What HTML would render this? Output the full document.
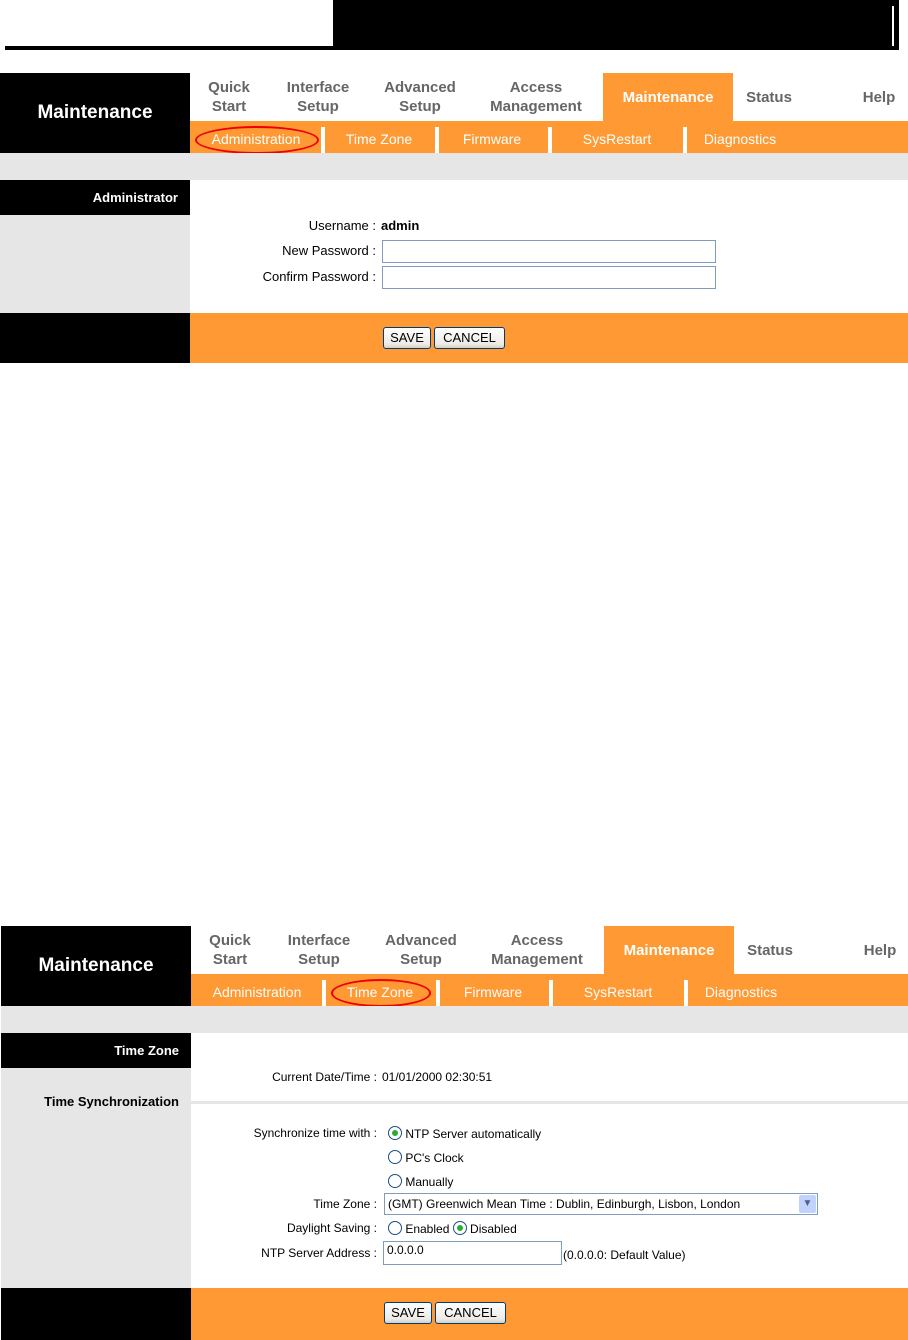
<!DOCTYPE html>
<html><head><meta charset="utf-8"><style>
*{margin:0;padding:0;box-sizing:border-box}
body{width:908px;height:1340px;background:#fff;position:relative;overflow:hidden;font-family:"Liberation Sans",Arial,sans-serif}
.a{position:absolute}
.blk{position:absolute;left:0;width:908px}
.nav{position:absolute;color:#666;font-weight:bold;font-size:15px;text-align:center;line-height:19px;transform:translateX(-50%);white-space:nowrap}
.sub{position:absolute;color:#fff;font-size:14px;transform:translateX(-50%);white-space:nowrap;line-height:16px}
.sep{position:absolute;width:4px;background:#fff}
.lbl{position:absolute;font-size:13px;color:#000;text-align:right;white-space:nowrap;line-height:16px}
.inp{position:absolute;border:1px solid #7f9db9;background:#fff;font-size:12px;padding:1px 3px}
.btn{position:absolute;height:22px;border:1px solid #003c74;border-radius:3px;background:linear-gradient(#fff,#ecebe6 80%,#d6d0c5);font-size:13px;text-align:center;line-height:20px}
.rad{display:inline-block;width:14px;height:14px;border:1px solid #1c5180;border-radius:50%;background:#fff;vertical-align:-2px;position:relative}
.rad.on::after{content:"";position:absolute;left:3px;top:3px;width:6px;height:6px;border-radius:50%;background:#2dad2d}
.oval{position:absolute;border:2px solid #e00;border-radius:50%}
</style></head><body>
<!-- header -->
<div class="a" style="left:5px;top:46px;width:330px;height:4px;background:#000"></div>
<div class="a" style="left:333px;top:0;width:566px;height:50px;background:#000"></div>
<div class="a" style="left:892px;top:6px;width:2px;height:40px;background:#fff"></div>

<!-- block 1 -->
<div class="blk" style="top:73px;height:290px">
 <div class="a" style="left:0;top:0;width:190px;height:80px;background:#000;color:#fff;font-weight:bold;font-size:19px;line-height:80px;text-align:center">Maintenance</div>
 <div class="a" style="left:603px;top:0;width:130px;height:48px;background:#ff9933"></div>
 <div class="nav" style="left:229px;top:5px">Quick<br>Start</div>
 <div class="nav" style="left:318px;top:5px">Interface<br>Setup</div>
 <div class="nav" style="left:420px;top:5px">Advanced<br>Setup</div>
 <div class="nav" style="left:536px;top:5px">Access<br>Management</div>
 <div class="nav" style="left:668px;top:15px;color:#fff">Maintenance</div>
 <div class="nav" style="left:769px;top:15px">Status</div>
 <div class="nav" style="left:879px;top:15px">Help</div>
 <div class="a" style="left:190px;top:48px;width:718px;height:32px;background:#ff9933"></div>
 <div class="sep" style="left:321px;top:54px;height:26px"></div>
 <div class="sep" style="left:435px;top:54px;height:26px"></div>
 <div class="sep" style="left:548px;top:54px;height:26px"></div>
 <div class="sep" style="left:683px;top:54px;height:26px"></div>
 <div class="sub" style="left:256px;top:58px">Administration</div>
 <div class="sub" style="left:379px;top:58px">Time Zone</div>
 <div class="sub" style="left:492px;top:58px">Firmware</div>
 <div class="sub" style="left:617px;top:58px">SysRestart</div>
 <div class="sub" style="left:740px;top:58px">Diagnostics</div>
 <div class="oval" style="left:195px;top:53px;width:124px;height:28px"></div>
 <div class="a" style="left:0;top:80px;width:908px;height:27px;background:#e6e6e6"></div>
 <div class="a" style="left:0;top:107px;width:190px;height:133px;background:#e6e6e6"></div>
 <div class="a" style="left:0;top:107px;width:190px;height:35px;background:#000;color:#fff;font-weight:bold;font-size:13px;text-align:right;padding-right:12px;line-height:35px">Administrator</div>
 <div class="lbl" style="right:532px;top:145px">Username :</div>
 <div class="lbl" style="left:381px;top:145px;font-weight:bold">admin</div>
 <div class="lbl" style="right:532px;top:170px">New Password :</div>
 <div class="inp" style="left:382px;top:167px;width:334px;height:23px"></div>
 <div class="lbl" style="right:532px;top:196px">Confirm Password :</div>
 <div class="inp" style="left:382px;top:193px;width:334px;height:23px"></div>
 <div class="a" style="left:0;top:240px;width:190px;height:50px;background:#000"></div>
 <div class="a" style="left:190px;top:240px;width:718px;height:50px;background:#ff9933"></div>
 <div class="btn" style="left:383px;top:254px;width:48px">SAVE</div>
 <div class="btn" style="left:434px;top:254px;width:71px">CANCEL</div>
</div>

<!-- block 2 -->
<div class="blk" style="top:926px;height:414px;left:1px">
 <div class="a" style="left:0;top:0;width:190px;height:80px;background:#000;color:#fff;font-weight:bold;font-size:19px;line-height:80px;text-align:center">Maintenance</div>
 <div class="a" style="left:603px;top:0;width:130px;height:48px;background:#ff9933"></div>
 <div class="nav" style="left:229px;top:5px">Quick<br>Start</div>
 <div class="nav" style="left:318px;top:5px">Interface<br>Setup</div>
 <div class="nav" style="left:420px;top:5px">Advanced<br>Setup</div>
 <div class="nav" style="left:536px;top:5px">Access<br>Management</div>
 <div class="nav" style="left:668px;top:15px;color:#fff">Maintenance</div>
 <div class="nav" style="left:769px;top:15px">Status</div>
 <div class="nav" style="left:879px;top:15px">Help</div>
 <div class="a" style="left:190px;top:48px;width:718px;height:32px;background:#ff9933"></div>
 <div class="sep" style="left:321px;top:54px;height:26px"></div>
 <div class="sep" style="left:435px;top:54px;height:26px"></div>
 <div class="sep" style="left:548px;top:54px;height:26px"></div>
 <div class="sep" style="left:683px;top:54px;height:26px"></div>
 <div class="sub" style="left:256px;top:58px">Administration</div>
 <div class="sub" style="left:379px;top:58px">Time Zone</div>
 <div class="sub" style="left:492px;top:58px">Firmware</div>
 <div class="sub" style="left:617px;top:58px">SysRestart</div>
 <div class="sub" style="left:740px;top:58px">Diagnostics</div>
 <div class="oval" style="left:330px;top:53px;width:100px;height:28px"></div>
 <div class="a" style="left:0;top:80px;width:908px;height:27px;background:#e6e6e6"></div>
 <div class="a" style="left:0;top:107px;width:190px;height:255px;background:#e6e6e6"></div>
 <div class="a" style="left:0;top:107px;width:190px;height:35px;background:#000;color:#fff;font-weight:bold;font-size:13px;text-align:right;padding-right:12px;line-height:35px">Time Zone</div>
 <div class="a" style="left:0;top:168px;width:190px;font-weight:bold;font-size:13px;text-align:right;padding-right:12px">Time Synchronization</div>
 <div class="a" style="left:190px;top:175px;width:718px;height:3px;background:#e6e6e6"></div>
 <div class="lbl" style="right:532px;top:143px;font-size:12px">Current Date/Time :</div>
 <div class="lbl" style="left:381px;top:143px;font-size:12px">01/01/2000 02:30:51</div>
 <div class="lbl" style="right:532px;top:199px;font-size:12px">Synchronize time with :</div>
 <div class="lbl" style="left:387px;top:200px;font-size:12px"><span class="rad on"></span> NTP Server automatically</div>
 <div class="lbl" style="left:387px;top:224px;font-size:12px"><span class="rad"></span> PC's Clock</div>
 <div class="lbl" style="left:387px;top:248px;font-size:12px"><span class="rad"></span> Manually</div>
 <div class="lbl" style="right:532px;top:270px;font-size:12px">Time Zone :</div>
 <div class="inp" style="left:383px;top:267px;width:434px;height:22px;font-size:12px;line-height:18px">(GMT) Greenwich Mean Time : Dublin, Edinburgh, Lisbon, London
  <div class="a" style="right:1px;top:1px;width:17px;height:18px;background:#c1d3fb;border-radius:2px;color:#4d6185;font-size:10px;text-align:center;line-height:18px">&#9660;</div></div>
 <div class="lbl" style="right:532px;top:294px;font-size:12px">Daylight Saving :</div>
 <div class="lbl" style="left:387px;top:295px;font-size:12px"><span class="rad"></span> Enabled <span class="rad on"></span> Disabled</div>
 <div class="lbl" style="right:532px;top:319px;font-size:12px">NTP Server Address :</div>
 <div class="inp" style="left:382px;top:315px;width:179px;height:24px;font-size:12px">0.0.0.0</div>
 <div class="lbl" style="left:562px;top:321px;font-size:12px">(0.0.0.0: Default Value)</div>
 <div class="a" style="left:0;top:362px;width:190px;height:52px;background:#000"></div>
 <div class="a" style="left:190px;top:362px;width:718px;height:52px;background:#ff9933"></div>
 <div class="btn" style="left:383px;top:376px;width:48px">SAVE</div>
 <div class="btn" style="left:434px;top:376px;width:71px">CANCEL</div>
</div>
</body></html>
